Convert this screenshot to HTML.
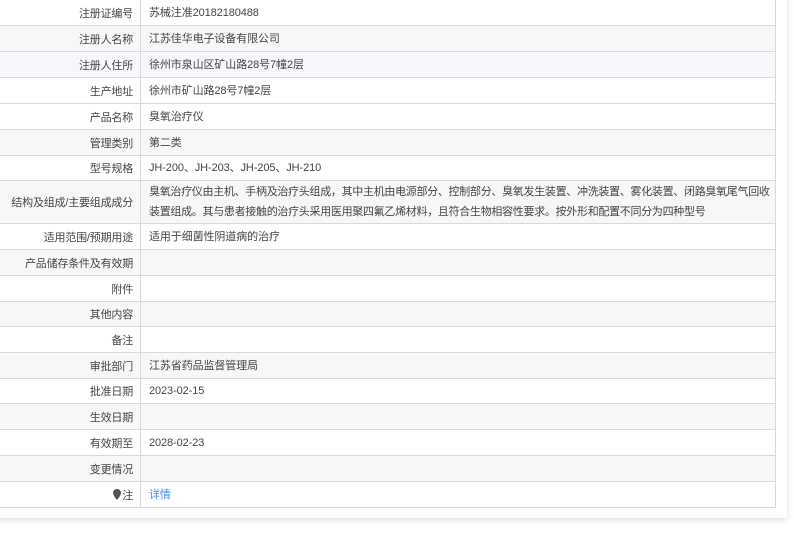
<!DOCTYPE html>
<html><head><meta charset="utf-8"><style>
body{margin:0;background:#fff;width:794px;height:539px;overflow:hidden;font-family:"Liberation Sans","Noto Sans CJK SC",sans-serif;font-size:11px;color:#444;}
.box{position:absolute;left:-10px;top:-10px;width:797px;height:528px;background:#fff;box-shadow:0 2px 6px rgba(0,0,0,0.12);}
.r{position:absolute;left:0;width:776px;border-bottom:1px solid #d9d9d9;border-right:1px solid #d9d9d9;box-sizing:border-box;}
.l{position:absolute;left:0;top:0;bottom:0;width:141px;border-right:1px solid #d9d9d9;box-sizing:border-box;display:flex;align-items:center;justify-content:flex-end;padding-right:7px;white-space:nowrap;letter-spacing:-0.2px;}
.v{position:absolute;left:149px;right:8px;top:0;bottom:0;display:flex;align-items:center;line-height:20px;letter-spacing:-0.1px;}
.g{background:#f7f7f7}.b{background:#f5f7fa}
a{color:#3e8ef7;text-decoration:none}
</style></head><body>
<div class="box"></div>
<div class="r" style="top:0;height:26px"><div class="l">注册证编号</div><div class="v">苏械注准20182180488</div></div>
<div class="r g" style="top:26px;height:26px"><div class="l">注册人名称</div><div class="v">江苏佳华电子设备有限公司</div></div>
<div class="r b" style="top:52px;height:26px"><div class="l">注册人住所</div><div class="v">徐州市泉山区矿山路28号7幢2层</div></div>
<div class="r" style="top:78px;height:26px"><div class="l">生产地址</div><div class="v">徐州市矿山路28号7幢2层</div></div>
<div class="r" style="top:104px;height:26px"><div class="l">产品名称</div><div class="v">臭氧治疗仪</div></div>
<div class="r g" style="top:130px;height:26px"><div class="l">管理类别</div><div class="v">第二类</div></div>
<div class="r" style="top:156px;height:25px"><div class="l">型号规格</div><div class="v">JH-200、JH-203、JH-205、JH-210</div></div>
<div class="r g" style="top:181px;height:43px"><div class="l">结构及组成/主要组成成分</div><div class="v"><div style="white-space:nowrap;letter-spacing:-0.3px">臭氧治疗仪由主机、手柄及治疗头组成，其中主机由电源部分、控制部分、臭氧发生装置、冲洗装置、雾化装置、闭路臭氧尾气回收<br>装置组成。其与患者接触的治疗头采用医用聚四氟乙烯材料，且符合生物相容性要求。按外形和配置不同分为四种型号</div></div></div>
<div class="r" style="top:224px;height:26px"><div class="l">适用范围/预期用途</div><div class="v">适用于细菌性阴道病的治疗</div></div>
<div class="r g" style="top:250px;height:26px"><div class="l">产品储存条件及有效期</div><div class="v"></div></div>
<div class="r" style="top:276px;height:26px"><div class="l">附件</div><div class="v"></div></div>
<div class="r g" style="top:302px;height:25px"><div class="l">其他内容</div><div class="v"></div></div>
<div class="r" style="top:327px;height:26px"><div class="l">备注</div><div class="v"></div></div>
<div class="r g" style="top:353px;height:26px"><div class="l">审批部门</div><div class="v">江苏省药品监督管理局</div></div>
<div class="r" style="top:379px;height:25px"><div class="l">批准日期</div><div class="v">2023-02-15</div></div>
<div class="r g" style="top:404px;height:26px"><div class="l">生效日期</div><div class="v"></div></div>
<div class="r" style="top:430px;height:26px"><div class="l">有效期至</div><div class="v">2028-02-23</div></div>
<div class="r g" style="top:456px;height:26px"><div class="l">变更情况</div><div class="v"></div></div>
<div class="r" style="top:482px;height:26px"><div class="l"><svg width="8" height="11" viewBox="0 0 8 11" style="margin-right:1px"><path d="M4 0C1.8 0 0 1.7 0 4c0 2.5 4 7 4 7s4-4.5 4-7C8 1.7 6.2 0 4 0z" fill="#555"/></svg>注</div><div class="v"><a>详情</a></div></div>
</body></html>
